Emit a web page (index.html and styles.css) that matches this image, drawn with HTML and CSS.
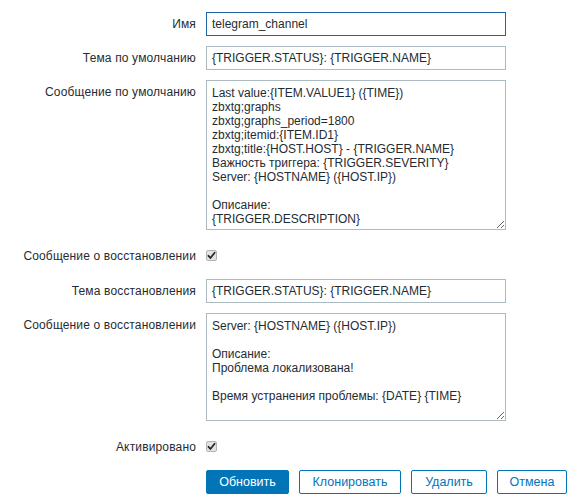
FILE: index.html
```html
<!DOCTYPE html>
<html lang="ru">
<head>
<meta charset="utf-8">
<link rel="stylesheet" href="styles.css">
</head>
<body>
<form class="form">
  <div class="row">
    <label class="lbl">Имя</label>
    <div class="field"><input class="inp focused" type="text" value="telegram_channel"></div>
  </div>
  <div class="row">
    <label class="lbl">Тема по умолчанию</label>
    <div class="field"><input class="inp" type="text" value="{TRIGGER.STATUS}: {TRIGGER.NAME}"></div>
  </div>
  <div class="row">
    <label class="lbl lbl-top">Сообщение по умолчанию</label>
    <div class="field"><textarea class="ta ta-big">Last value:{ITEM.VALUE1} ({TIME})
zbxtg;graphs
zbxtg;graphs_period=1800
zbxtg;itemid:{ITEM.ID1}
zbxtg;title:{HOST.HOST} - {TRIGGER.NAME}
Важность триггера: {TRIGGER.SEVERITY}
Server: {HOSTNAME} ({HOST.IP})

Описание:
{TRIGGER.DESCRIPTION}</textarea></div>
  </div>
  <div class="row row-check">
    <label class="lbl">Сообщение о восстановлении</label>
    <div class="field"><span class="chk"><svg width="11" height="11" viewBox="0 0 11 11"><path d="M2.5 5.8 L4.4 8 L8.6 2.8" fill="none" stroke="#2b2b2b" stroke-width="1.8" stroke-linecap="round" stroke-linejoin="round"/></svg></span></div>
  </div>
  <div class="row">
    <label class="lbl">Тема восстановления</label>
    <div class="field"><input class="inp" type="text" value="{TRIGGER.STATUS}: {TRIGGER.NAME}"></div>
  </div>
  <div class="row">
    <label class="lbl lbl-top">Сообщение о восстановлении</label>
    <div class="field"><textarea class="ta ta-small">Server: {HOSTNAME} ({HOST.IP})

Описание:
Проблема локализована!

Время устранения проблемы: {DATE} {TIME}</textarea></div>
  </div>
  <div class="row row-check">
    <label class="lbl">Активировано</label>
    <div class="field"><span class="chk"><svg width="11" height="11" viewBox="0 0 11 11"><path d="M2.5 5.8 L4.4 8 L8.6 2.8" fill="none" stroke="#2b2b2b" stroke-width="1.8" stroke-linecap="round" stroke-linejoin="round"/></svg></span></div>
  </div>
  <div class="row">
    <span class="lbl"></span>
    <div class="buttons">
      <button type="button" class="btn btn-main w-update">Обновить</button>
      <button type="button" class="btn w-clone">Клонировать</button>
      <button type="button" class="btn w-delete">Удалить</button>
      <button type="button" class="btn w-cancel">Отмена</button>
    </div>
  </div>
</form>
</body>
</html>
```
FILE: styles.css
```css
html, body {
  margin: 0;
  padding: 0;
  background: #ffffff;
}
body {
  font-family: "Liberation Sans", Arial, sans-serif;
  font-size: 12px;
  color: #1f2c33;
}
.form {
  display: flex;
  flex-direction: column;
  gap: 10px;
  padding-top: 12px;
}
.row {
  display: grid;
  grid-template-columns: 196px 300px;
  column-gap: 10px;
  align-items: center;
}
.row-check {
  height: 29px;
  padding-top: 2px;
  box-sizing: border-box;
}
.lbl {
  text-align: right;
  line-height: 14px;
  letter-spacing: 0.15px;
  color: #1f2c33;
}
.lbl-top {
  align-self: start;
  padding-top: 5px;
}
.field {
  display: flex;
  align-items: center;
}
.inp {
  box-sizing: border-box;
  width: 300px;
  height: 24px;
  margin: 0;
  padding: 0 5px;
  border: 1px solid #acbbc2;
  font-family: "Liberation Sans", Arial, sans-serif;
  font-size: 12px;
  color: #1f2c33;
  background: #fff;
  outline: none;
}
.inp.focused {
  border-color: #1f65a6;
}
.ta {
  box-sizing: border-box;
  width: 300px;
  margin: 0;
  padding: 5px 5px 4px;
  border: 1px solid #acbbc2;
  font-family: "Liberation Sans", Arial, sans-serif;
  font-size: 12px;
  line-height: 14px;
  color: #1f2c33;
  background: #fff;
  resize: both;
  overflow: hidden;
  outline: none;
}
.ta-big {
  height: 150px;
}
.ta-small {
  height: 108px;
}
.chk {
  display: inline-flex;
  box-sizing: border-box;
  width: 11px;
  height: 11px;
  border: 1px solid #b3b3b3;
  border-radius: 2px;
  background: #e3e3e3;
  align-items: center;
  justify-content: center;
  overflow: hidden;
}
.chk svg {
  display: block;
  flex: none;
}
.buttons {
  display: flex;
  gap: 10px;
}
.btn {
  flex: none;
  box-sizing: border-box;
  height: 24px;
  margin: 0;
  padding: 0;
  border: 1px solid #0275b8;
  border-radius: 2px;
  background: #ffffff;
  color: #0275b8;
  font-family: "Liberation Sans", Arial, sans-serif;
  font-size: 12.5px;
  text-align: center;
  cursor: pointer;
}
.btn-main {
  background: #0275b8;
  color: #ffffff;
}
.w-update { width: 83px; }
.w-clone { width: 102px; }
.w-delete { width: 76px; }
.w-cancel { width: 70px; }
```
